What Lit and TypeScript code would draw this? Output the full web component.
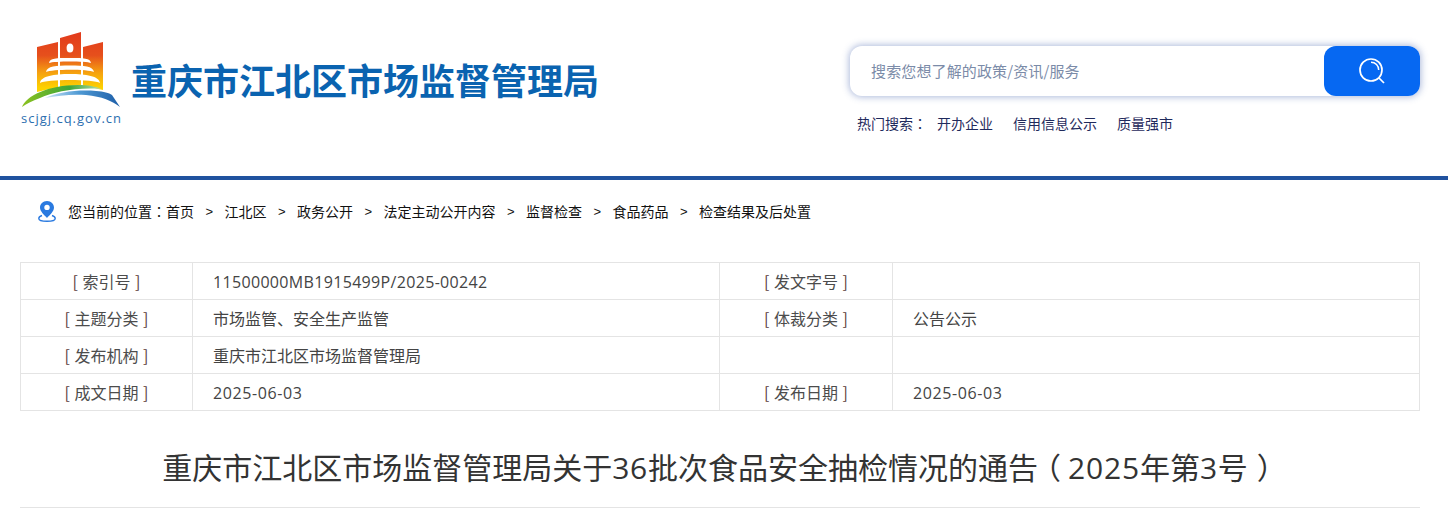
import { LitElement, html, css, svg } from "lit";
import { customElement } from "lit/decorators.js";

const crumbs = ["江北区", "政务公开", "法定主动公开内容", "监督检查", "食品药品", "检查结果及后处置"];
const rows: [string, string, string, string][] = [
  ["[ 索引号 ]", "11500000MB1915499P/2025-00242", "[ 发文字号 ]", ""],
  ["[ 主题分类 ]", "市场监管、安全生产监管", "[ 体裁分类 ]", "公告公示"],
  ["[ 发布机构 ]", "重庆市江北区市场监督管理局", "", ""],
  ["[ 成文日期 ]", "2025-06-03", "[ 发布日期 ]", "2025-06-03"],
];

const logo = svg`<svg class="logo-mark" width="102" height="80" viewBox="0 0 102 80">
  <defs>
    <linearGradient id="fl" gradientUnits="userSpaceOnUse" x1="0" y1="2" x2="0" y2="58">
      <stop offset="0" stop-color="#e23a1c"/><stop offset="0.42" stop-color="#e6501c"/>
      <stop offset="0.72" stop-color="#f5a010"/><stop offset="1" stop-color="#fdd200"/>
    </linearGradient>
    <linearGradient id="gr" x1="0" y1="0" x2="1" y2="0">
      <stop offset="0" stop-color="#8cc21f"/><stop offset="0.6" stop-color="#3ea53a"/><stop offset="1" stop-color="#b5dcae"/>
    </linearGradient>
    <linearGradient id="bl" x1="0" y1="0" x2="1" y2="0">
      <stop offset="0" stop-color="#cfe6f6"/><stop offset="0.45" stop-color="#4f9ad4"/><stop offset="1" stop-color="#1d5ea8"/>
    </linearGradient>
  </defs>
  <path d="M17 17 L38 12 V58 C30 58.800 24 60 17 62 Z" fill="url(#fl)"/>
  <path d="M40 8 L61 2 V56 C54 55.500 47 56 40 57 Z" fill="url(#fl)"/>
  <path d="M63 17 L83 12 V60 C77 58.500 70 57 63 56 Z" fill="url(#fl)"/>
  <ellipse cx="50" cy="18" rx="3.400" ry="4.500" fill="#fff"/>
  <path d="M29 33 C30 28 36 28 50 28 C64 28 70 28 71 33 C66 31 34 31 29 33 Z" fill="#fff"/>
  <path d="M26 42 C27 36 36 35.500 50 35.500 C64 35.500 73 36 74 42 C68 39 32 39 26 42 Z" fill="#fff"/>
  <path d="M20 53 C21 46 34 44 50 44 C66 44 79 46 80 53 C74 49 26 49 20 53 Z" fill="#fff"/>
  <path d="M2 77 C6 66 28 55 58 55 C68 55 76 56.500 81 59 C56 57 34 62 20 68 C12 71 6 74 2 77 Z" fill="url(#gr)"/>
  <path d="M25 68 C38 62 58 59.500 76 61 C84 61.500 89 63 92 65 L100 77 C92 71 82 66.500 66 65 C52 64 38 65.500 25 68 Z" fill="url(#bl)"/>
</svg>`;

const pin = svg`<svg width="20" height="22" viewBox="0 0 20 22">
  <path d="M10 1 C5.800 1 3 4 3 7.600 C3 11.600 7.400 15.200 10 18 C12.600 15.200 17 11.600 17 7.600 C17 4 14.200 1 10 1 Z" fill="#2a7ae0"/>
  <circle cx="10" cy="7.400" r="2.700" fill="#fff"/>
  <path d="M5 15.500 C3 16.200 1.800 17.300 1.800 18.400 C1.800 20 5.500 21.200 10 21.200 C14.500 21.200 18.200 20 18.200 18.400 C18.200 17.300 17 16.200 15 15.500" fill="none" stroke="#2a7ae0" stroke-width="1.400"/>
</svg>`;

const searchIcon = svg`<svg width="26" height="26" viewBox="0 0 26 26" fill="none" stroke="#fff">
  <circle cx="12" cy="12" r="11" stroke-width="1.700"/>
  <path d="M12 4.300 C16.500 4.300 19.700 7.500 19.700 12" stroke-width="1.500"/>
  <path d="M20 20 L25 25" stroke-width="1.700"/>
</svg>`;

@customElement("app-root")
export class AppRoot extends LitElement {
  static styles = css`
    :host {
      display: block;
      width: 1448px;
      height: 510px;
      overflow: hidden;
      background: #fff;
      font-family: "Noto Sans CJK SC", "Noto Sans", sans-serif;
    }
    .header {
      height: 176px;
      box-sizing: border-box;
      display: flex;
      justify-content: space-between;
      padding: 0 28px 0 20px;
    }
    .brand {
      display: flex;
      align-items: flex-start;
      gap: 8px;
      padding-top: 30px;
    }
    .logo {
      width: 103px;
      display: flex;
      flex-direction: column;
      align-items: center;
    }
    .logo-mark { display: block; flex: none; align-self: flex-start; }
    .domain {
      font: 13px/16px "Open Sans", sans-serif;
      letter-spacing: 1px;
      color: #2c6fb0;
      white-space: nowrap;
    }
    .site-name {
      margin-top: 26px;
      font-size: 36px;
      line-height: 46px;
      font-weight: 700;
      color: #0a63b0;
      white-space: nowrap;
    }
    .right { width: 570px; padding-top: 46px; }
    .search {
      height: 50px;
      display: flex;
      border-radius: 12px;
      background: #fff;
      box-shadow: 0 0 7px 1px rgba(60, 90, 170, 0.42);
    }
    .placeholder {
      flex: 1;
      padding-left: 21px;
      font-size: 15px;
      line-height: 50px;
      letter-spacing: 0.13px;
      color: #7b8ba8;
    }
    .btn {
      width: 96px;
      background: #0668f2;
      border-radius: 12px;
      display: flex;
      align-items: center;
      justify-content: center;
    }
    .hot {
      display: flex;
      margin-top: 17px;
      padding-left: 7px;
      font-size: 14px;
      line-height: 20px;
      color: #1f2a5c;
    }
    .hot span { margin-right: 20px; }
    .hot .label { margin-right: 10px; }
    .c { font-family: "Noto Sans CJK TC", sans-serif; }
    .hot .c { margin: 0; }
    .rule { height: 4px; background: #20529f; }
    .crumbs {
      display: flex;
      align-items: center;
      height: 62px;
      padding-left: 37px;
      font-size: 14px;
      color: #111;
      white-space: nowrap;
    }
    .crumbs svg { margin-right: 11px; flex: none; }
    .sep { margin: 0 11.250px; width: 8px; text-align: center; font-family: "Liberation Sans", sans-serif; font-size: 13px; }
    .tbl {
      margin: 20px 28px 0 20px;
      border: 1px solid #e4e4e4;
      border-bottom: 0;
      display: grid;
      grid-template-columns: 172px 527px 173px 1fr;
    }
    .cell {
      height: 36px;
      border-bottom: 1px solid #e4e4e4;
      border-right: 1px solid #e4e4e4;
      font-size: 16px;
      line-height: 36px;
      color: #444;
      padding-left: 20px;
      white-space: nowrap;
    }
    .cell.k { text-align: center; padding-left: 0; color: #5a3a3a; word-spacing: 1px; }
    .cell.k b { font-weight: 400; color: #4c4c4c; }
    .cell:nth-child(4n) { border-right: 0; }
    .num { font-family: "Open Sans", sans-serif; letter-spacing: 0.33px; }
    .num.date { letter-spacing: 0.6px; }
    .title {
      margin: 0 28px 0 20px;
      height: 96px;
      border-bottom: 1px solid #e4e4e4;
      text-align: center;
      font-size: 30px;
      line-height: 110px;
      font-weight: 400;
      color: #333;
      white-space: nowrap;
    }
    .title .num { letter-spacing: 0.8px; }
    .pl { font-feature-settings: "halt"; margin: 0 7px 0 8px; }
    .pr { font-feature-settings: "halt"; margin: 0 6px 0 9px; }
  `;

  private key(t: string) {
    if (!t) return "";
    const inner = t.slice(1, -1);
    return html`[<b>${inner}</b>]`;
  }

  private val(t: string) {
    if (!t || !/^[\x00-\x7f]+$/.test(t)) return t;
    return html`<span class="num ${/^[\d-]+$/.test(t) ? "date" : ""}">${t}</span>`;
  }

  render() {
    return html`
      <div class="header">
        <div class="brand">
          <div class="logo">${logo}<div class="domain">scjgj.cq.gov.cn</div></div>
          <div class="site-name">重庆市江北区市场监督管理局</div>
        </div>
        <div class="right">
          <div class="search">
            <div class="placeholder">搜索您想了解的政策/资讯/服务</div>
            <div class="btn">${searchIcon}</div>
          </div>
          <div class="hot">
            <span class="label">热门搜索<span class="c">：</span></span><span>开办企业</span><span>信用信息公示</span><span>质量强市</span>
          </div>
        </div>
      </div>
      <div class="rule"></div>
      <div class="crumbs">
        ${pin}<span>您当前的位置<span class="c">：</span>首页</span>
        ${crumbs.map((c) => html`<span class="sep">&gt;</span><span>${c}</span>`)}
      </div>
      <div class="tbl">
        ${rows.map(
          (r) => html`
            <div class="cell k">${this.key(r[0])}</div>
            <div class="cell">${this.val(r[1])}</div>
            <div class="cell k">${this.key(r[2])}</div>
            <div class="cell">${this.val(r[3])}</div>
          `
        )}
      </div>
      <h1 class="title">重庆市江北区市场监督管理局关于<span class="num">36</span>批次食品安全抽检情况的通告<span class="pl">（</span><span class="num">2025</span>年第<span class="num">3</span>号<span class="pr">）</span></h1>
    `;
  }
}
